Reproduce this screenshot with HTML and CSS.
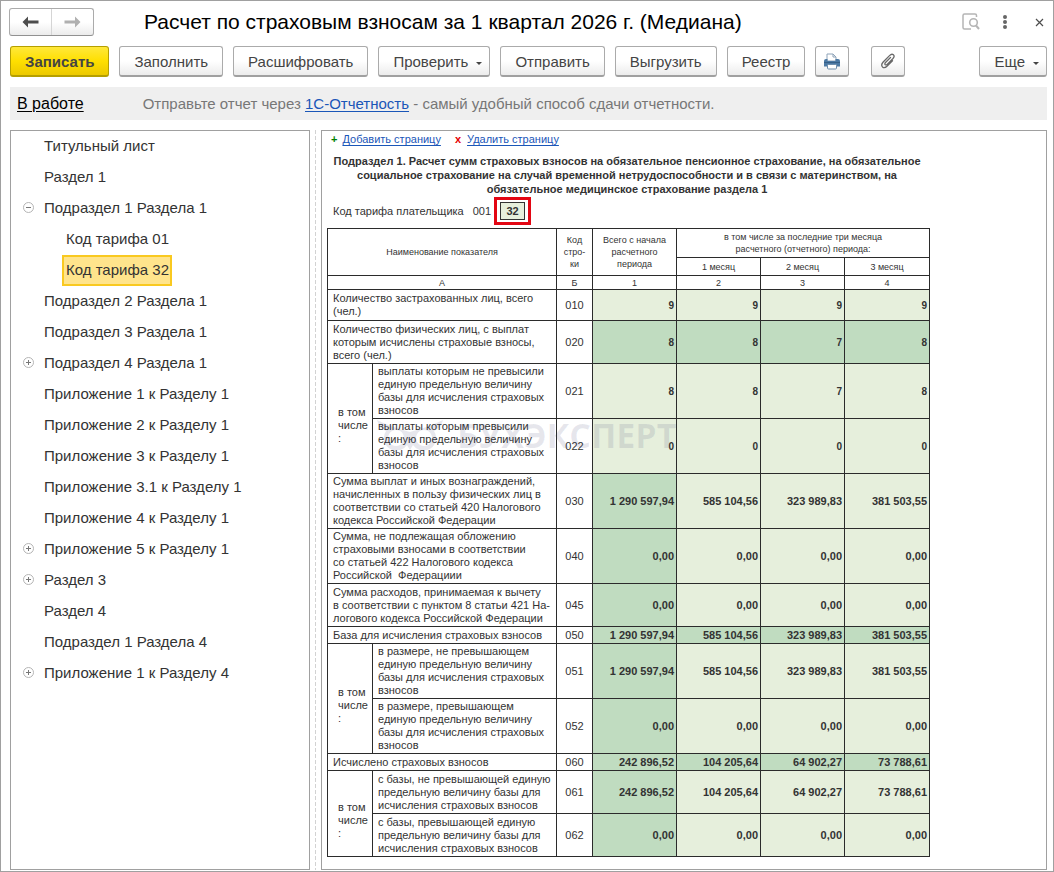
FILE: index.html
```html
<!DOCTYPE html>
<html lang="ru">
<head>
<meta charset="utf-8">
<title>Расчет по страховым взносам за 1 квартал 2026 г. (Медиана)</title>
<link rel="stylesheet" href="styles.css">
</head>
<body>
<div class="window">
  <header class="titlebar">
    <div class="history">
      <button type="button" aria-label="Назад"><svg width="17" height="12" viewBox="0 0 17 12"><path d="M0.5 6 L6 0.500 V4.500 H16.500 V7.500 H6 V11.500 Z" fill="#4d4d4d"/></svg></button>
      <button type="button" aria-label="Вперед"><svg width="17" height="12" viewBox="0 0 17 12"><path d="M16.500 6 L11 0.500 V4.500 H0.500 V7.500 H11 V11.500 Z" fill="#b0b0b0"/></svg></button>
    </div>
    <h1>Расчет по страховым взносам за 1 квартал 2026 г. (Медиана)</h1>
    <div class="window-actions">
      <button type="button" aria-label="Предварительный просмотр"><svg width="18" height="18" viewBox="0 0 18 18" fill="none" stroke="#b5b5b5"><path d="M14.500 4 V2.500 Q14.500 1 13 1 H2.500 Q1 1 1 2.500 V14.500 Q1 16 2.500 16 H9" stroke-width="1.500"/><circle cx="11.500" cy="9.500" r="3.800" stroke-width="1.600"/><path d="M14 12.500 L17 16" stroke-width="2"/></svg></button>
      <button type="button" aria-label="Меню"><svg width="6" height="16" viewBox="0 0 6 16" fill="#666"><circle cx="3" cy="3" r="2"/><circle cx="3" cy="8" r="2"/><circle cx="3" cy="13" r="2"/></svg></button>
      <button type="button" class="close" aria-label="Закрыть"><svg width="9" height="9" viewBox="0 0 9 9" stroke="#4d4d4d" stroke-width="1.200"><path d="M1 1 L8 8 M8 1 L1 8"/></svg></button>
    </div>
  </header>

  <div class="toolbar">
    <button type="button" class="btn primary">Записать</button>
    <button type="button" class="btn">Заполнить</button>
    <button type="button" class="btn">Расшифровать</button>
    <button type="button" class="btn menu">Проверить</button>
    <button type="button" class="btn">Отправить</button>
    <button type="button" class="btn">Выгрузить</button>
    <button type="button" class="btn">Реестр</button>
    <button type="button" class="btn icon" aria-label="Печать"><svg width="18" height="17" viewBox="0 0 18 17"><path d="M4 8 V1 H10 L13 4 V8 Z" fill="#fff" stroke="#8ea3b8"/><path d="M10 1 V4 H13" fill="none" stroke="#8ea3b8"/><path d="M3 6 H4.500 V8 H12.500 V6 H15 Q17 6 17 8 V13.500 H1 V8 Q1 6 3 6 Z" fill="#4b79a4"/><path d="M1 9.500 H17" stroke="#365f87"/><rect x="4.500" y="11.500" width="9" height="4.500" rx="1" fill="#fff" stroke="#6d8dab"/></svg></button>
    <button type="button" class="btn icon attach" aria-label="Вложения"><svg width="16" height="16" viewBox="0 0 16 16" fill="none" stroke="#696969" stroke-width="1.300" stroke-linecap="round"><path d="M10.500 4.500 L5.500 9.500 Q4.300 11 5.300 11.700 Q6.200 12.300 7.400 11.100 L13 5.500 Q15 3.200 13.400 1.800 Q11.700 0.400 9.500 2.600 L3.200 9 Q0.600 11.900 2.500 13.900 Q4.500 15.700 7.200 13 L12.500 7.700"/></svg></button>
    <button type="button" class="btn menu more">Еще</button>
  </div>

  <div class="notice">
    <a class="status" href="#">В работе</a>
    <p>Отправьте отчет через <a href="#">1С-Отчетность</a> - самый удобный способ сдачи отчетности.</p>
  </div>

  <main class="content">
    <nav class="tree" aria-label="Разделы отчета">
      <ul>
        <li><a href="#">Титульный лист</a></li>
        <li><a href="#">Раздел 1</a></li>
        <li><button type="button" class="toggle open" aria-label="Свернуть"></button><a href="#">Подраздел 1 Раздела 1</a></li>
        <li class="child"><a href="#">Код тарифа 01</a></li>
        <li class="child current"><a class="selected" href="#">Код тарифа 32</a></li>
        <li><a href="#">Подраздел 2 Раздела 1</a></li>
        <li><a href="#">Подраздел 3 Раздела 1</a></li>
        <li><button type="button" class="toggle" aria-label="Развернуть"></button><a href="#">Подраздел 4 Раздела 1</a></li>
        <li><a href="#">Приложение 1 к Разделу 1</a></li>
        <li><a href="#">Приложение 2 к Разделу 1</a></li>
        <li><a href="#">Приложение 3 к Разделу 1</a></li>
        <li><a href="#">Приложение 3.1 к Разделу 1</a></li>
        <li><a href="#">Приложение 4 к Разделу 1</a></li>
        <li><button type="button" class="toggle" aria-label="Развернуть"></button><a href="#">Приложение 5 к Разделу 1</a></li>
        <li><button type="button" class="toggle" aria-label="Развернуть"></button><a href="#">Раздел 3</a></li>
        <li><a href="#">Раздел 4</a></li>
        <li><a href="#">Подраздел 1 Раздела 4</a></li>
        <li><button type="button" class="toggle" aria-label="Развернуть"></button><a href="#">Приложение 1 к Разделу 4</a></li>
      </ul>
    </nav>
    <div class="splitter"></div>
    <section class="sheet">
      <div class="page-links">
        <span class="plus">+</span><a href="#">Добавить страницу</a>
        <span class="cross">x</span><a href="#">Удалить страницу</a>
      </div>
      <h2>Подраздел 1. Расчет сумм страховых взносов на обязательное пенсионное страхование, на обязательное<br>социальное страхование на случай временной нетрудоспособности и в связи с материнством, на<br>обязательное медицинское страхование раздела 1</h2>
      <div class="tariff">
        <label for="tariff">Код тарифа плательщика</label>
        <span>001</span>
        <span class="mark"><input id="tariff" type="text" value="32"></span>
      </div>
      <div class="table-wrap">
        <table>
          <colgroup><col class="c-group"><col class="c-name"><col class="c-code"><col class="c-sum"><col class="c-sum"><col class="c-sum"><col class="c-last"></colgroup>
          <thead>
            <tr class="h29"><th colspan="2" rowspan="2">Наименование показателя</th><th rowspan="2">Код<br>стро-<br>ки</th><th rowspan="2">Всего с начала<br>расчетного<br>периода</th><th colspan="3">в том числе за последние три месяца<br>расчетного (отчетного) периода:</th></tr>
            <tr class="h18"><th>1 месяц</th><th>2 месяц</th><th>3 месяц</th></tr>
            <tr class="h14"><th colspan="2">А</th><th>Б</th><th>1</th><th>2</th><th>3</th><th>4</th></tr>
          </thead>
          <tbody>
            <tr class="h31 counts"><td colspan="2">Количество застрахованных лиц, всего<br>(чел.)</td><td class="code">010</td><td class="n">9</td><td class="n">9</td><td class="n">9</td><td class="n">9</td></tr>
            <tr class="h43 counts"><td colspan="2">Количество физических лиц, с выплат<br>которым исчислены страховые взносы,<br>всего (чел.)</td><td class="code">020</td><td class="n t">8</td><td class="n t">8</td><td class="n t">7</td><td class="n t">8</td></tr>
            <tr class="h55 counts"><td rowspan="2" class="group">в том<br>числе<br>:</td><td>выплаты которым не превысили<br>единую предельную величину<br>базы для исчисления страховых<br>взносов</td><td class="code">021</td><td class="n">8</td><td class="n">8</td><td class="n">7</td><td class="n">8</td></tr>
            <tr class="h55 counts"><td>выплаты которым превысили<br>единую предельную величину<br>базы для исчисления страховых<br>взносов</td><td class="code">022</td><td class="n">0</td><td class="n">0</td><td class="n">0</td><td class="n">0</td></tr>
            <tr class="h55"><td colspan="2">Сумма выплат и иных вознаграждений,<br>начисленных в пользу физических лиц в<br>соответствии со статьей 420 Налогового<br>кодекса Российской Федерации</td><td class="code">030</td><td class="n t">1 290 597,94</td><td class="n">585 104,56</td><td class="n">323 989,83</td><td class="n">381 503,55</td></tr>
            <tr class="h55"><td colspan="2">Сумма, не подлежащая обложению<br>страховыми взносами в соответствии<br>со статьей 422 Налогового кодекса<br>Российской&nbsp; Федерациии</td><td class="code">040</td><td class="n t">0,00</td><td class="n">0,00</td><td class="n">0,00</td><td class="n">0,00</td></tr>
            <tr class="h43"><td colspan="2">Сумма расходов, принимаемая к вычету<br>в соответствии с пунктом 8 статьи 421 На-<br>логового кодекса Российской Федерации</td><td class="code">045</td><td class="n t">0,00</td><td class="n">0,00</td><td class="n">0,00</td><td class="n">0,00</td></tr>
            <tr class="h17"><td colspan="2">База для исчисления страховых взносов</td><td class="code">050</td><td class="n t">1 290 597,94</td><td class="n t">585 104,56</td><td class="n t">323 989,83</td><td class="n t">381 503,55</td></tr>
            <tr class="h55"><td rowspan="2" class="group">в том<br>числе<br>:</td><td>в размере, не превышающем<br>единую предельную величину<br>базы для исчисления страховых<br>взносов</td><td class="code">051</td><td class="n t">1 290 597,94</td><td class="n">585 104,56</td><td class="n">323 989,83</td><td class="n">381 503,55</td></tr>
            <tr class="h55"><td>в размере, превышающем<br>единую предельную величину<br>базы для исчисления страховых<br>взносов</td><td class="code">052</td><td class="n t">0,00</td><td class="n">0,00</td><td class="n">0,00</td><td class="n">0,00</td></tr>
            <tr class="h17"><td colspan="2">Исчислено страховых взносов</td><td class="code">060</td><td class="n t">242 896,52</td><td class="n t">104 205,64</td><td class="n t">64 902,27</td><td class="n t">73 788,61</td></tr>
            <tr class="h43"><td rowspan="2" class="group">в том<br>числе<br>:</td><td>с базы, не превышающей единую<br>предельную величину базы для<br>исчисления страховых взносов</td><td class="code">061</td><td class="n t">242 896,52</td><td class="n">104 205,64</td><td class="n">64 902,27</td><td class="n">73 788,61</td></tr>
            <tr class="h43"><td>с базы, превышающей единую<br>предельную величину базы для<br>исчисления страховых взносов</td><td class="code">062</td><td class="n t">0,00</td><td class="n">0,00</td><td class="n">0,00</td><td class="n">0,00</td></tr>
          </tbody>
        </table>
        <div class="watermark" aria-hidden="true">
          <svg width="66" height="30" viewBox="0 0 66 30"><path d="M0 0 Q14 7 33 12 Q52 7 66 0 Q64 8 57 11 A12 12 0 0 1 36 25 L33 30 L30 25 A12 12 0 0 1 9 11 Q2 8 0 0 Z M19 10 a8 8 0 1 0 0.100 0 Z M47 10 a8 8 0 1 0 0.100 0 Z" fill="currentColor" fill-rule="evenodd"/></svg>
          <span>БУХЭКСПЕРТ</span>
        </div>
      </div>
    </section>
  </main>
</div>
</body>
</html>
```
FILE: styles.css
```css
* { box-sizing: border-box; }

body {
  margin: 0;
  font-family: "Liberation Sans", Arial, sans-serif;
  font-size: 15px;
  color: #333;
  background: #fff;
}

button { font: inherit; color: inherit; margin: 0; cursor: pointer; }
a { color: #1a56b8; text-underline-offset: 2px; }
svg { display: block; }

.window {
  display: flex;
  flex-direction: column;
  min-height: 100vh;
  padding: 7px 6px 1px 9px;
  border: 1px solid #a0a0a0;
}

.titlebar { display: flex; align-items: center; height: 28px; }

.history {
  display: flex;
  height: 28px;
  width: 85px;
  margin-left: -1px;
  border: 1px solid #ababab;
  border-bottom-color: #919191;
  border-radius: 3px;
  background: linear-gradient(#fff 50%, #ececec);
}
.history button {
  display: flex;
  flex: 1;
  align-items: center;
  justify-content: center;
  padding: 0;
  border: 0;
  background: none;
}
.history button + button { border-left: 1px solid #d5d5d5; }

h1 {
  flex: 1;
  margin: 0 0 0 50px;
  font-size: 21px;
  line-height: 24px;
  font-weight: 400;
  color: #000;
}

.window-actions { display: flex; align-items: center; gap: 22px; padding-right: 3px; }
.window-actions button { padding: 0; border: 0; background: none; }
.window-actions .close { margin-left: 5px; }

.toolbar { display: flex; gap: 10px; margin-top: 10px; }

.btn {
  height: 31px;
  padding: 0 14px;
  border: 1px solid #ababab;
  border-bottom: 2px solid #a0a0a0;
  border-radius: 3px;
  background: linear-gradient(#fff 50%, #ececec);
  color: #444;
  white-space: nowrap;
}
.btn.primary {
  border-color: #b59f00;
  background: linear-gradient(#ffe83b, #ffdf00 50%, #ecc900);
  font-weight: 700;
}
.btn.menu { padding-right: 7px; }
.btn.menu::after {
  content: "";
  display: inline-block;
  margin-left: 8px;
  vertical-align: 2px;
  border: 3px solid transparent;
  border-top-color: #444;
  border-bottom: 0;
}
.btn.icon { display: flex; align-items: center; justify-content: center; width: 34px; padding: 0; }
.btn.attach { margin-left: 12px; }
.btn.more { margin-left: auto; }

.notice {
  display: flex;
  align-items: center;
  height: 33px;
  margin-top: 10px;
  padding-left: 7px;
  background: #efefef;
}
.notice p { margin: 0 0 0 59px; font-size: 15px; color: #777; }
.status { font-size: 16px; color: #000; }

.content { display: flex; flex: 1; margin-top: 10px; }

.tree { flex: 0 0 300px; border: 1px solid #a0a0a0; }
.tree ul { margin: 0; padding: 0; list-style: none; }
.tree li { display: flex; align-items: center; height: 31px; padding: 0 0 2px 33px; }
.tree a { color: #333; text-decoration: none; }
.tree .child { padding-left: 55px; }
.tree .current { padding-bottom: 0; }
.tree .selected {
  margin-left: -4px;
  padding: 4px 1px 6px 2px;
  border: 2px solid #f9c920;
  background: #ffe48c;
  line-height: 17px;
}

.toggle {
  position: relative;
  flex: none;
  width: 11px;
  height: 11px;
  margin-left: -21px;
  margin-right: 10px;
  padding: 0;
  border: 1px solid #b5b5b5;
  border-radius: 50%;
  background: #fff;
}
.toggle::before, .toggle::after {
  content: "";
  position: absolute;
  left: 2px;
  top: 4px;
  width: 5px;
  height: 1px;
  background: #777;
}
.toggle::after { transform: rotate(90deg); }
.toggle.open::after { display: none; }

.splitter {
  flex: 0 0 1px;
  margin: 0 5px;
  background: repeating-linear-gradient(#d2d2d2 0 4px, transparent 4px 6px);
}

.sheet {
  flex: 1;
  min-width: 0;
  padding: 0 5px 12px;
  border: 1px solid #a0a0a0;
  font-size: 11px;
}

.page-links { display: flex; align-items: center; height: 16px; padding-left: 4px; }
.plus { margin-right: 5px; font-weight: 700; color: #008000; }
.cross { margin: 0 6px 0 14px; font-weight: 700; color: #e60000; }

h2 {
  width: 600px;
  margin: 7px 0 0;
  font-size: 11px;
  line-height: 14px;
  font-weight: 700;
  text-align: center;
  white-space: nowrap;
}

.tariff { display: flex; align-items: center; height: 29px; padding-left: 6px; }
.tariff label { margin-right: 9px; }
.mark { margin-left: 3px; padding: 2px 3px; border: 3px solid #e30613; }
.mark input {
  display: block;
  width: 25px;
  height: 18px;
  padding: 0;
  border: 1px solid #333;
  background: #e6efdc;
  font: 700 11px "Liberation Sans", Arial, sans-serif;
  color: #333;
  text-align: center;
}

.table-wrap { position: relative; width: 603px; margin-top: 3px; }

table { width: 603px; border-collapse: collapse; table-layout: fixed; line-height: 13px; }
.c-group { width: 45px; }
.c-name { width: 184px; }
.c-code { width: 36px; }
.c-sum { width: 84px; }
.c-last { width: 85px; }
th, td { padding: 0 0 0 5px; border: 1px solid #2b2b2b; text-align: left; white-space: nowrap; }
th { padding: 0; font-size: 9px; line-height: 12px; font-weight: 400; text-align: center; }
.code { padding: 0; text-align: center; }
.group { padding: 13px 0 0 10px; }
.n { padding: 0 2px 0 0; background: #e6efdc; font-weight: 700; text-align: right; }
.n.t { background: #c0dcc0; }
.counts .n { font-size: 10px; }

.h14 { height: 14px; }
.h17 { height: 17px; }
.h18 { height: 18px; }
.h29 { height: 29px; }
.h31 { height: 31px; }
.h43 { height: 43px; }
.h55 { height: 55px; }

.watermark {
  position: absolute;
  left: 50px;
  top: 191px;
  display: flex;
  align-items: center;
  gap: 14px;
  color: rgba(60, 60, 110, 0.12);
  font: 700 34px/32px "Open Sans", "Noto Sans", sans-serif;
  pointer-events: none;
}
```
